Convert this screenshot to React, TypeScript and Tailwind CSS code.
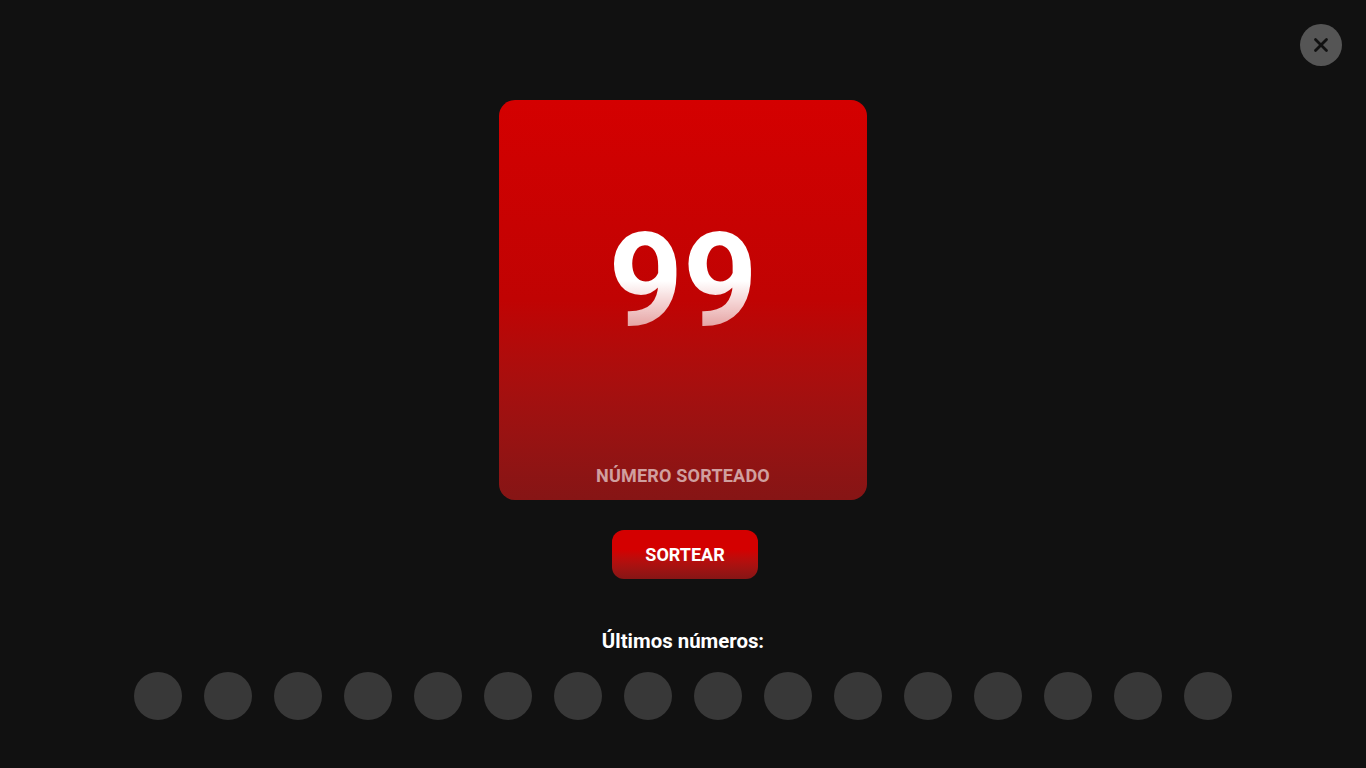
import { X } from "lucide-react";

export default function App() {
  const ultimos = Array.from({ length: 16 }, (_, i) => i);
  return (
    <div
      className="relative w-full min-h-screen bg-[#111111] flex flex-col items-center"
      style={{ fontFamily: "Roboto, 'Liberation Sans', sans-serif" }}
    >
      {/* fechar */}
      <button className="absolute top-6 right-6 w-[42px] h-[42px] rounded-full bg-[#555555] flex items-center justify-center">
        <X size={22} strokeWidth={3} className="text-[#111111]" />
      </button>

      {/* card do número */}
      <div className="mt-[100px] w-[368px] h-[400px] rounded-2xl bg-gradient-to-b from-[#d40000] via-[#c00303] to-[#861515] flex flex-col items-center">
        <div className="mt-[81px] text-[130px] leading-[200px] font-bold text-transparent bg-clip-text bg-gradient-to-b from-white from-50% to-white/20">
          99
        </div>
        <p className="mt-auto mb-[12px] text-lg font-bold text-white/60 leading-6 tracking-[0.2px]">
          NÚMERO SORTEADO
        </p>
      </div>

      <button className="mt-[30px] ml-1 w-[146px] h-[49px] rounded-xl bg-gradient-to-b from-[#d40000] from-40% to-[#861515] text-white font-bold text-lg">
        SORTEAR
      </button>

      <h2 className="mt-[50px] text-white font-bold text-[20.4px] leading-6">Últimos números:</h2>
      <div className="mt-[19px] flex gap-[22px]">
        {ultimos.map((n) => (
          <div key={n} className="w-12 h-12 rounded-full bg-[#383838]"></div>
        ))}
      </div>
    </div>
  );
}
